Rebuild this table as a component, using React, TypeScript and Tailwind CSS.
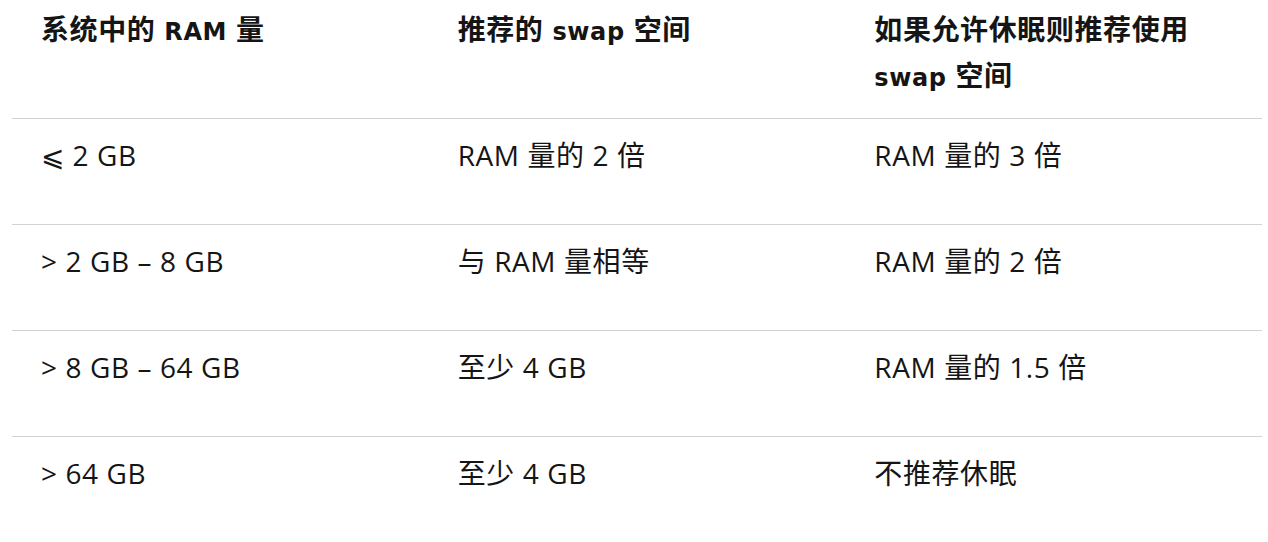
import React from 'react';

const rows = [
  ['⩽ 2 GB', 'RAM 量的 2 倍', 'RAM 量的 3 倍'],
  ['> 2 GB – 8 GB', '与 RAM 量相等', 'RAM 量的 2 倍'],
  ['> 8 GB – 64 GB', '至少 4 GB', 'RAM 量的 1.5 倍'],
  ['> 64 GB', '至少 4 GB', '不推荐休眠'],
];

// header latin runs are set a bit smaller than the CJK glyphs
const Mixed: React.FC<{ text: string }> = ({ text }) => (
  <>
    {text.split(/([\u4e00-\u9fff]+)/).map((part, i) =>
      /[\u4e00-\u9fff]/.test(part) ? (
        <span key={i}>{part}</span>
      ) : (
        <span key={i} className="text-[24px]" style={{ fontFamily: '"DejaVu Sans", sans-serif' }}>
          {part}
        </span>
      )
    )}
  </>
);

const thClass =
  'pl-[29px] pr-6 pt-[8px] pb-[18px] text-left align-top text-[28px] font-bold leading-[43px] tracking-[0.6px]';

const App: React.FC = () => {
  return (
    <div
      className="min-h-[542px] bg-white px-3 text-[#151515]"
      style={{ fontFamily: '"Open Sans", "Noto Sans CJK SC", sans-serif' }}
    >
      <table className="w-[1250px] table-fixed border-collapse">
        <thead>
          <tr className="border-b border-[#d2d2d2]">
            <th className={thClass}>
              <Mixed text="系统中的 RAM 量" />
            </th>
            <th className={thClass}>
              <Mixed text="推荐的 swap 空间" />
            </th>
            <th className={thClass}>
              <Mixed text="如果允许休眠则推荐使用" />
              <br />
              <Mixed text="swap 空间" />
            </th>
          </tr>
        </thead>
        <tbody>
          {rows.map((r, i) => (
            <tr key={i} className={i < rows.length - 1 ? 'border-b border-[#d2d2d2]' : ''}>
              {r.map((c, j) => (
                <td
                  key={j}
                  className="h-[106px] pl-[29px] pr-6 pt-[16px] align-top text-[28px] leading-[40px] tracking-[0.6px]"
                >
                  {c}
                </td>
              ))}
            </tr>
          ))}
        </tbody>
      </table>
    </div>
  );
};

export default App;
